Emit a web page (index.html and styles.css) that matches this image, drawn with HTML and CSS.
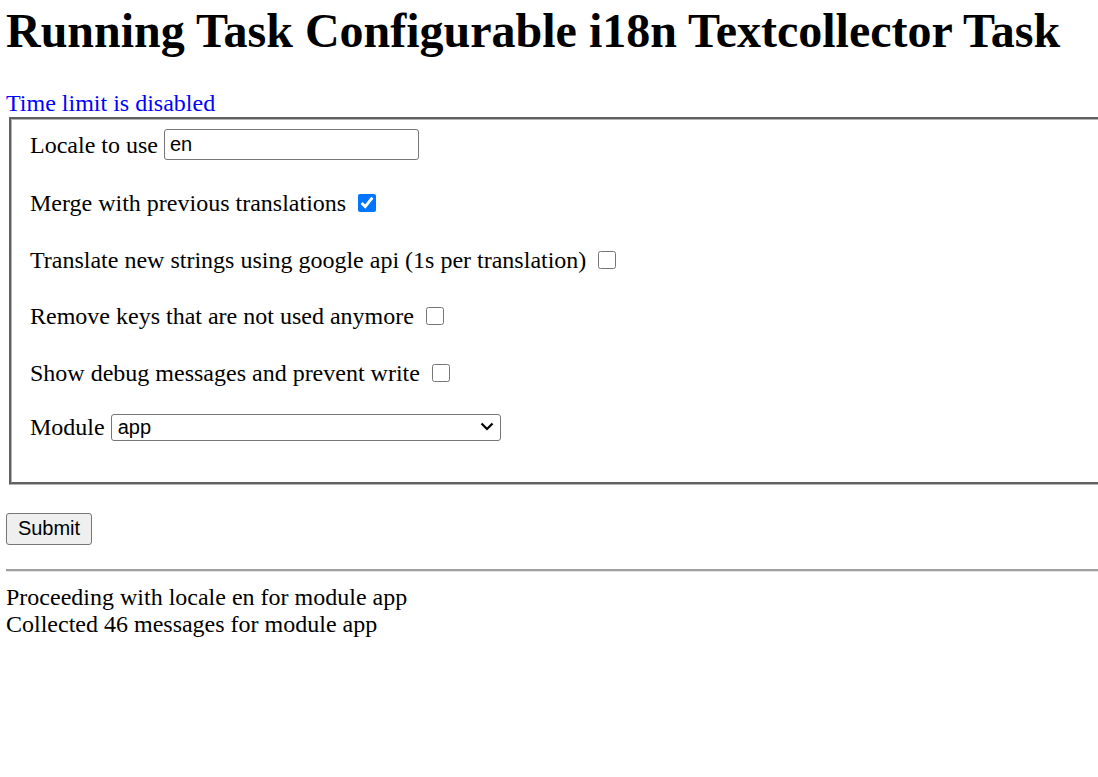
FILE: index.html
```html
<!DOCTYPE html>
<html>
<head>
<meta charset="utf-8">
<title>Running Task</title>
<link rel="stylesheet" href="styles.css">
</head>
<body>
<h1 class="title">Running Task Configurable i18n Textcollector Task</h1>
<div class="notice">Time limit is disabled</div>
<form class="task-form">
  <fieldset class="options">
    <div class="row">
      <label class="label" for="locale">Locale to use</label>
      <input class="text-input" id="locale" type="text" value="en">
    </div>
    <div class="row row-second">
      <label class="label" for="merge">Merge with previous translations</label>
      <input class="check" id="merge" type="checkbox" checked>
    </div>
    <div class="row">
      <label class="label" for="translate">Translate new strings using google api (1s per translation)</label>
      <input class="check" id="translate" type="checkbox">
    </div>
    <div class="row">
      <label class="label" for="remove">Remove keys that are not used anymore</label>
      <input class="check" id="remove" type="checkbox">
    </div>
    <div class="row">
      <label class="label" for="debug">Show debug messages and prevent write</label>
      <input class="check" id="debug" type="checkbox">
    </div>
    <div class="row row-last">
      <label class="label" for="module">Module</label>
      <span class="select-wrap">
        <select class="select" id="module">
          <option>app</option>
        </select>
        <svg class="chevron" width="14" height="9" viewBox="0 0 14 9" aria-hidden="true"><path d="M1.5 1.5 L7 7 L12.5 1.5" fill="none" stroke="#000" stroke-width="2.2"/></svg>
      </span>
    </div>
  </fieldset>
  <div class="actions">
    <button class="submit" type="button">Submit</button>
  </div>
</form>
<hr class="divider">
<div class="log">
  <div class="log-line">Proceeding with locale en for module app</div>
  <div class="log-line">Collected 46 messages for module app</div>
</div>
</body>
</html>
```
FILE: styles.css
```css
html {
  overflow: hidden;
  background: #fff;
}

body {
  margin: 0 0 0 6px;
  font-family: "Liberation Serif", "Times New Roman", serif;
  font-size: 24px;
  color: #000;
}

.title {
  font-size: 48px;
  font-weight: bold;
  line-height: 55px;
  margin: 3px 0 31px 0;
  white-space: nowrap;
}

.notice {
  color: #0000ff;
  line-height: 28px;
}

.task-form {
  margin: 0;
}

.options {
  margin: 0 -40px 0 3px;
  padding: 8.5px 18px 39px 18px;
  border: 3px groove #b4b4b4;
  display: flex;
  flex-direction: column;
  gap: 24.5px;
  min-width: 0;
}

.row {
  display: flex;
  align-items: center;
  height: 32px;
  white-space: nowrap;
}

.row-second {
  margin-top: 2px;
}

.row-last {
  margin-top: -2.5px;
}

.label {
  line-height: 28px;
}

.text-input {
  box-sizing: border-box;
  width: 255px;
  height: 31px;
  margin: 0 0 0 6px;
  padding: 1px 5px;
  font-family: "Liberation Sans", Arial, sans-serif;
  font-size: 20px;
  color: #000;
  border: 1px solid #767676;
  border-radius: 3px;
  background: #fff;
}

.check {
  width: 18px;
  height: 18px;
  margin: 0 0 0 12px;
}

.select-wrap {
  position: relative;
  display: inline-block;
  margin-left: 6px;
  height: 27px;
}

.select {
  box-sizing: border-box;
  width: 390px;
  height: 27px;
  margin: 0;
  padding: 0 30px 0 6px;
  font-family: "Liberation Sans", Arial, sans-serif;
  font-size: 20px;
  color: #000;
  border: 1px solid #767676;
  border-radius: 3px;
  background: #fff;
  appearance: none;
  -webkit-appearance: none;
}

.chevron {
  position: absolute;
  right: 7px;
  top: 9px;
  pointer-events: none;
}

.actions {
  margin-top: 28px;
  line-height: 0;
}

.submit {
  box-sizing: border-box;
  width: 86px;
  height: 32px;
  padding: 0 6px;
  font-family: "Liberation Sans", Arial, sans-serif;
  font-size: 20px;
  color: #000;
  background: #efefef;
  border: 1px solid #767676;
  border-radius: 3px;
}

.divider {
  margin: 24px -20px 0 0;
  height: 0;
  border: none;
  border-top: 2px solid #a0a0a0;
  border-bottom: 1px solid #e4e4e4;
}

.log {
  margin-top: 12px;
  line-height: 27px;
}
```
